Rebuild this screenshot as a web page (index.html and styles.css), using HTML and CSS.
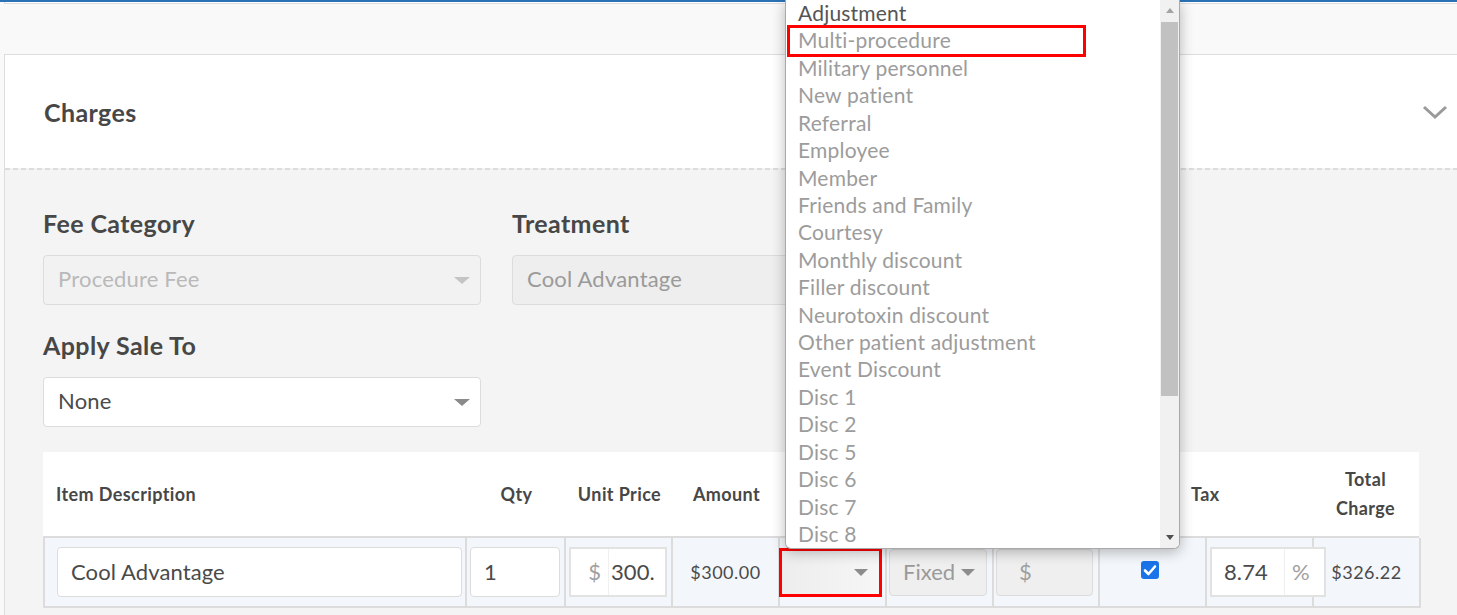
FILE: index.html
```html
<!DOCTYPE html>
<html>
<head>
<meta charset="utf-8">
<link rel="stylesheet" href="styles.css">
</head>
<body>
<div class="topbar"></div>
<div class="prev-card"></div>
<section class="card">
  <div class="card-head">
    <h2 class="card-title">Charges</h2>
    <svg class="chevron" width="26" height="16" viewBox="0 0 26 16"><polyline points="2,3 13,13 24,3" fill="none" stroke="#9a9a9a" stroke-width="3"/></svg>
  </div>
  <div class="dashed"></div>
  <div class="card-body">
    <div class="form-row">
      <div class="field">
        <label class="lbl">Fee Category</label>
        <div class="select disabled"><span>Procedure Fee</span><span class="caret light"></span></div>
      </div>
      <div class="field">
        <label class="lbl">Treatment</label>
        <div class="select readonly"><span>Cool Advantage</span></div>
      </div>
    </div>
    <div class="form-row second">
      <div class="field">
        <label class="lbl">Apply Sale To</label>
        <div class="select plain"><span>None</span><span class="caret"></span></div>
      </div>
    </div>

    <div class="table">
      <div class="thead">
        <div class="th left">Item Description</div>
        <div class="th">Qty</div>
        <div class="th">Unit Price</div>
        <div class="th">Amount</div>
        <div class="th"></div>
        <div class="th"></div>
        <div class="th"></div>
        <div class="th"></div>
        <div class="th left">Tax</div>
        <div class="th">Total<br>Charge</div>
      </div>
      <div class="trow">
        <div class="td pad-desc"><div class="inp w-desc">Cool Advantage</div></div>
        <div class="td pad-3"><div class="inp w-qty">1</div></div>
        <div class="td pad-3">
          <div class="group w-unit"><span class="addon dollar">$</span><span class="gval">300.</span></div>
        </div>
        <div class="td center amount">$300.00</div>
        <div class="td pad-neg">
          <div class="sel-red"><span class="caret dark"></span></div>
        </div>
        <div class="td pad-2">
          <div class="sel-grey w-fixed"><span>Fixed</span><span class="caret dark"></span></div>
        </div>
        <div class="td pad-2">
          <div class="sel-grey w-val"><span class="dollar-grey">$</span></div>
        </div>
        <div class="td center chk">
          <svg class="checkbox" width="18" height="18" viewBox="0 0 18 18"><rect x="0" y="0" width="18" height="18" rx="3" fill="#1a73e8"/><polyline points="4,9.5 7.5,13 14,5.5" fill="none" stroke="#fff" stroke-width="2.6" stroke-linecap="round" stroke-linejoin="round"/></svg>
        </div>
        <div class="td pad-3">
          <div class="group w-tax"><span class="tval">8.74</span><span class="addon pct">%</span></div>
        </div>
        <div class="td center amount">$326.22</div>
      </div>
    </div>
  </div>
</section>

<div class="dropdown">
  <ul class="dd-list">
    <li class="first">Adjustment</li>
    <li>Multi-procedure</li>
    <li>Military personnel</li>
    <li>New patient</li>
    <li>Referral</li>
    <li>Employee</li>
    <li>Member</li>
    <li>Friends and Family</li>
    <li>Courtesy</li>
    <li>Monthly discount</li>
    <li>Filler discount</li>
    <li>Neurotoxin discount</li>
    <li>Other patient adjustment</li>
    <li>Event Discount</li>
    <li>Disc 1</li>
    <li>Disc 2</li>
    <li>Disc 5</li>
    <li>Disc 6</li>
    <li>Disc 7</li>
    <li>Disc 8</li>
  </ul>
  <div class="dd-scroll">
    <div class="sb-up"><span class="tri-up"></span></div>
    <div class="sb-thumb"></div>
    <div class="sb-rest"><span class="tri-down"></span></div>
  </div>
  <div class="mark"></div>
</div>
</body>
</html>
```

FILE: styles.css
```css
* { box-sizing: border-box; }
html, body { margin: 0; padding: 0; }
body {
  width: 1457px;
  height: 615px;
  overflow: hidden;
  position: relative;
  background: #f9f9f9;
  font-family: Lato, "Open Sans", sans-serif;
  color: #4a4a4a;
}
.topbar { height: 2px; background: #2a72b5; }
.prev-card {
  margin-left: 4px;
  height: 2px;
  background: #fff;
  border-left: 1px solid #ddd;
  border-bottom: 1px solid #ddd;
}
.card {
  margin: 50px 0 0 4px;
  border-left: 1px solid #ddd;
  border-top: 1px solid #ddd;
  background: #fff;
}
.card-head {
  height: 113px;
  display: flex;
  align-items: center;
  justify-content: space-between;
  padding: 0 9px 0 39px;
}
.card-title { margin: 0; font-size: 25px; letter-spacing: 0.4px; font-weight: 700; color: #474747; }
.dashed {
  height: 2px;
  background: repeating-linear-gradient(to right, #dcdcdc 0 5px, #f4f4f4 5px 8px);
}
.card-body {
  background: #f4f4f4;
  padding: 39px 0 7px 38px;
}
.form-row { display: flex; gap: 31px; }
.form-row.second { margin-top: 26px; }
.field { width: 438px; }
.lbl {
  display: block;
  font-size: 25px;
  letter-spacing: 0.4px;
  font-weight: 700;
  line-height: 29px;
  margin-bottom: 17px;
  color: #474747;
}
.select {
  height: 50px;
  border: 1px solid #dcdcdc;
  border-radius: 4px;
  display: flex;
  align-items: center;
  justify-content: space-between;
  padding: 0 10px 3px 14px;
  font-size: 22px;
  letter-spacing: 0.2px;
}
.select .caret { margin-top: 3px; }
.select.disabled { background: #f2f2f2; color: #b9b9b9; }
.select.readonly { background: #eeeeee; color: #9a9a9a; }
.select.plain { background: #fff; color: #4a4a4a; }
.caret {
  width: 0; height: 0;
  border-left: 8px solid transparent;
  border-right: 8px solid transparent;
  border-top: 7px solid #8a8a8a;
}
.caret.light { border-top-color: #c4c4c4; }
.caret.dark { border-left-width: 7px; border-right-width: 7px; border-top-color: #8c8c8c; }

.table { margin-top: 25px; width: 1378px; }
.thead {
  display: grid;
  grid-template-columns: 424px 99px 107px 107px 107px 107px 106px 91px 121px 107px;
  height: 86px;
  background: #fff;
  border-bottom: 2px solid #dcdcdc;
  width: 1376px;
}
.th {
  display: flex;
  align-items: center;
  justify-content: center;
  text-align: center;
  font-size: 18px;
  letter-spacing: 0.4px;
  font-weight: 700;
  line-height: 29px;
  color: #474747;
}
.th.left { justify-content: flex-start; text-align: left; }
.th:first-child { padding-left: 13px; }
.trow {
  display: grid;
  grid-template-columns: 422px 99px 107px 107px 107px 107px 106px 107px 107px 107px;
  height: 70px;
  background: #f3f6fa;
  border-left: 2px solid #dcdcdc;
  border-bottom: 2px solid #dcdcdc;
}
.td {
  border-right: 2px solid #dcdcdc;
  display: flex;
  align-items: center;
}
.td.center { justify-content: center; }
.td.chk { padding-right: 5px; }
.pad-desc { padding-left: 12px; }
.pad-3 { padding-left: 3px; }
.pad-2 { padding-left: 2px; }
.pad-neg { padding-left: 0; }
.amount { font-size: 18px; letter-spacing: 0.5px; color: #4a4a4a; }
.inp {
  height: 50px;
  border: 1px solid #dcdcdc;
  border-radius: 4px;
  background: #fff;
  font-size: 22px;
  letter-spacing: 0.1px;
  padding: 0 0 2px 13px;
  display: flex;
  align-items: center;
}
.w-desc { width: 405px; }
.w-qty { width: 90px; }
.group {
  height: 50px;
  border: 2px solid #e2e2e2;
  background: #fff;
  display: flex;
  align-items: center;
  font-size: 22px;
  letter-spacing: 0.1px;
  overflow: hidden;
}
.w-unit { width: 98px; }
.w-tax { width: 116px; flex: none; }
.addon { color: #a0a0a0; }
.dollar { width: 38px; flex: none; padding: 0 7px 2px 0; border-right: 1px solid #f0f0f0; height: 100%; display: flex; align-items: center; justify-content: flex-end; }
.gval { padding: 0 0 2px 2px; white-space: nowrap; }
.tval { padding: 0 0 2px 12px; width: 73px; flex: none; height: 100%; display: flex; align-items: center; border-right: 1px solid #f0f0f0; }
.pct { padding: 0 0 2px 7px; }
.sel-red {
  margin-left: -1px;
  width: 103px;
  height: 49px;
  border: 3px solid #ff0000;
  background: linear-gradient(to right, #ededed, #f6f6f6);
  display: flex;
  align-items: center;
  justify-content: flex-end;
  padding-right: 11px;
  margin-top: 1px;
}
.sel-grey {
  height: 47px;
  border: 1px solid #dcdcdc;
  border-radius: 4px;
  background: #efefef;
  display: flex;
  align-items: center;
  gap: 6px;
  padding: 0 0 3px 13px;
  font-size: 22px;
  color: #9a9a9a;
  margin-top: 1px;
}
.sel-grey .caret { margin-top: 3px; }
.w-fixed { width: 98px; }
.w-val { width: 97px; padding-left: 22px; }
.dollar-grey { color: #a0a0a0; }
.checkbox { display: block; margin-top: -4px; }

.dropdown {
  position: absolute;
  left: 785px;
  top: 0;
  width: 395px;
  height: 549px;
  background: #fff;
  border: 1px solid #a9a9a9;
  border-top: none;
  border-radius: 0 0 6px 6px;
  box-shadow: 0 3px 14px rgba(0, 0, 0, 0.28);
  display: flex;
  overflow: hidden;
}
.dd-list {
  list-style: none;
  margin: -1px 0 0 0;
  padding: 0 0 0 12px;
  flex: 1;
  font-size: 21px;
  letter-spacing: 0.2px;
  line-height: 27.42px;
  color: #9c9c9c;
}
.dd-list li { white-space: nowrap; }
.dd-list li.first { color: #555; }
.dd-scroll {
  width: 19px;
  background: #f1f1f1;
  display: flex;
  flex-direction: column;
  align-items: center;
}
.sb-up { height: 22px; display: flex; align-items: center; justify-content: center; width: 100%; }
.tri-up {
  width: 0; height: 0;
  border-left: 4px solid transparent;
  border-right: 4px solid transparent;
  border-bottom: 5px solid #a3a3a3;
  margin-bottom: 2px;
}
.sb-thumb { width: 17px; height: 374px; background: #c1c1c1; }
.sb-rest { flex: 1; width: 100%; display: flex; align-items: flex-end; justify-content: center; padding-bottom: 8px; }
.tri-down {
  width: 0; height: 0;
  border-left: 4px solid transparent;
  border-right: 4px solid transparent;
  border-top: 5px solid #505050;
}
.mark {
  position: absolute;
  left: 1px;
  top: 25px;
  width: 299px;
  height: 32px;
  border: 3px solid #ff0000;
}
```
